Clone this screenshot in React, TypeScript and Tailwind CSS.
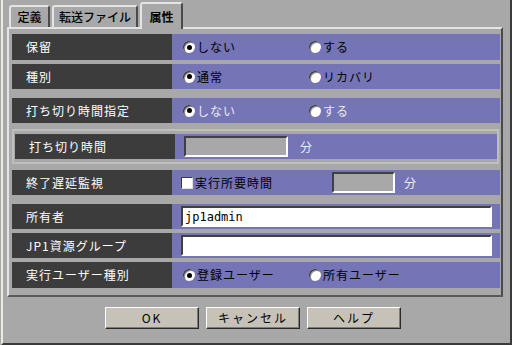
import React from 'react';

const font = { fontFamily: '"Noto Sans CJK JP", "Noto Sans", sans-serif' };

function Radio({ checked, label, disabled }: { checked?: boolean; label: string; disabled?: boolean }) {
  return (
    <div className="flex w-[126px] items-center">
      <span className="flex h-[12px] w-[12px] items-center justify-center rounded-full bg-white shadow-[inset_1px_1px_0_#3a3a3a,inset_2px_2px_0_#9a9a9a]">
        {checked && <span className="h-[5px] w-[5px] rounded-full bg-black" />}
      </span>
      <span className={`ml-[2px] tracking-[1px] ${disabled ? 'text-[#ececec]' : 'text-black'}`}>{label}</span>
    </div>
  );
}

function Row({ label, h = 'h-[26px]', mt, children, pl = 'pl-[14px]' }: { label: string; h?: string; mt: string; children: React.ReactNode; pl?: string }) {
  return (
    <div className={`flex ${h} ${mt}`}>
      <div className={`flex w-[160px] items-center bg-[#3c3c3c] ${pl} tracking-[1px] text-white`}>{label}</div>
      <div className="flex flex-1 items-center bg-[#7474b6] pl-[11px]">{children}</div>
    </div>
  );
}

function Field({ w, white, value }: { w: string; white?: boolean; value?: string }) {
  return (
    <div
      className={`flex h-[21px] ${w} items-center border-2 border-t-[#404040] border-l-[#404040] border-r-white border-b-white ${
        white ? 'bg-white' : 'bg-[#a8a8a8]'
      } pl-[2px] text-[12px] text-black`}
      style={value ? { fontFamily: '"DejaVu Sans Mono", monospace' } : undefined}
    >
      {value}
    </div>
  );
}

function Tab({ label, active, w }: { label: string; active?: boolean; w: string }) {
  return (
    <div
      className={`flex ${w} items-center justify-center rounded-t-[3px] border-l-2 border-t-2 border-r-2 border-l-[#e4e4e4] border-t-[#e4e4e4] border-r-[#4a4a4a] bg-[#a8a8a8] text-black ${
        active ? 'relative z-10 -mb-[2px] h-[27px] font-bold' : 'h-[22px] font-medium'
      }`}
    >
      {label}
    </div>
  );
}

function Button({ label }: { label: string }) {
  return (
    <div className="flex h-[22px] w-[94px] items-center justify-center border border-t-white border-l-white border-r-[#2a2a2a] border-b-[#2a2a2a] bg-[#c6c2b8] tracking-[2px] text-black shadow-[inset_-1px_-1px_0_#7c7c7c]">
      {label}
    </div>
  );
}

export default function App() {
  return (
    <div className="h-[345px] w-[512px] overflow-hidden bg-[#a8a8a8] text-[12px]" style={font}>
      <div className="ml-[1px] flex h-[345px] w-[511px] flex-col border-b-2 border-l-2 border-r-2 border-b-[#3a3a3a] border-l-[#ecebe2] border-r-[#3a3a3a]">
        <div className="flex h-[27px] items-end gap-[2px] pl-[6px]">
          <Tab label="定義" w="w-[41px]" />
          <Tab label="転送ファイル" w="w-[86px]" />
          <Tab label="属性" active w="w-[43px]" />
        </div>
        <div className="ml-[4px] flex h-[270px] w-[496px] flex-col border-2 border-l-[#e4e4e4] border-t-[#e4e4e4] border-r-[#4a4a4a] border-b-[#5a5a5a] pl-[3px] pr-px">
          <Row label="保留" mt="mt-[5px]">
            <Radio checked label="しない" />
            <Radio label="する" />
          </Row>
          <Row label="種別" mt="mt-[4px]" h="h-[25px]">
            <Radio checked label="通常" />
            <Radio label="リカバリ" />
          </Row>
          <Row label="打ち切り時間指定" mt="mt-[9px]" h="h-[25px]">
            <Radio checked label="しない" disabled />
            <Radio label="する" disabled />
          </Row>
          <div className="mt-[6px] mr-px flex h-[35px] flex-col border-2 border-[#bebebe] pt-[3px] pl-px">
            <Row label="打ち切り時間" mt="mt-0" h="h-[25px]" pl="pl-[14px]">
              <div className="-ml-[2px]">
                <Field w="w-[104px]" />
              </div>
              <span className="ml-[12px] text-[#ececec]">分</span>
            </Row>
          </div>
          <Row label="終了遅延監視" mt="mt-[6px]" h="h-[25px]">
            <span className="-ml-[2px] h-[12px] w-[12px] border border-t-[#3a3a3a] border-l-[#3a3a3a] border-r-[#e0e0e0] border-b-[#e0e0e0] bg-white" />
            <span className="ml-[2px] w-[137px] tracking-[1px] text-black">実行所要時間</span>
            <Field w="w-[63px]" />
            <span className="ml-[9px] text-[#ececec]">分</span>
          </Row>
          <Row label="所有者" mt="mt-[9px]" h="h-[25px]">
            <div className="-ml-[2px]">
              <Field w="w-[311px]" white value="jp1admin" />
            </div>
          </Row>
          <Row label="JP1資源グループ" mt="mt-[4px]" h="h-[25px]">
            <div className="-ml-[2px]">
              <Field w="w-[311px]" white />
            </div>
          </Row>
          <Row label="実行ユーザー種別" mt="mt-[4px]">
            <Radio checked label="登録ユーザー" />
            <Radio label="所有ユーザー" />
          </Row>
        </div>
        <div className="mt-[10px] flex gap-[7px] pl-[102px]">
          <Button label="OK" />
          <Button label="キャンセル" />
          <Button label="ヘルプ" />
        </div>
      </div>
    </div>
  );
}
